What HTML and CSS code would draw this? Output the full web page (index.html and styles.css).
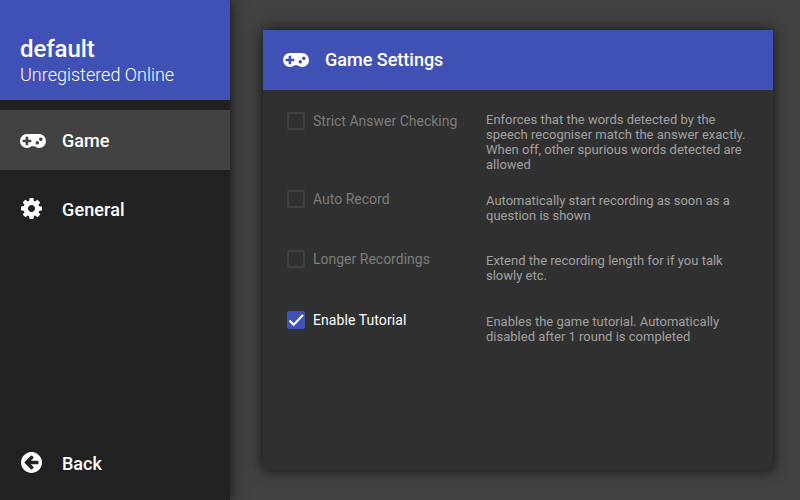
FILE: index.html
```html
<!DOCTYPE html>
<html lang="en">
<head>
<meta charset="utf-8">
<title>Game Settings</title>
<link rel="stylesheet" href="styles.css">
</head>
<body>
<svg class="defs" width="0" height="0">
  <symbol id="gamepad" viewBox="0 0 1920 1024">
    <path fill-rule="evenodd" transform="translate(0 1024) scale(1 -1)" d="M832 448v128q0 14-9 23t-23 9h-192v192q0 14-9 23t-23 9h-128q-14 0-23-9t-9-23v-192h-192q-14 0-23-9t-9-23v-128q0-14 9-23t23-9h192v-192q0-14 9-23t23-9h128q14 0 23 9t9 23v192h192q14 0 23 9t9 23zM1408 384q0 53-37.500 90.500t-90.500 37.500-90.500-37.500-37.500-90.500 37.500-90.500 90.500-37.500 90.500 37.500 37.500 90.500zM1664 640q0 53-37.500 90.500t-90.500 37.500-90.500-37.500-37.500-90.500 37.500-90.500 90.500-37.500 90.500 37.500 37.500 90.500zM1920 512q0-212-150-362t-362-150q-192 0-338 128h-220q-146-128-338-128-212 0-362 150t-150 362 150 362 362 150h896q212 0 362-150t150-362z"/>
  </symbol>
  <symbol id="cog" viewBox="128 128 1536 1536">
    <path d="M1152 896q0-106-75-181t-181-75-181 75-75 181 75 181 181 75 181-75 75-181zm512-109v222q0 12-8 23t-20 13l-185 28q-19 54-39 91 35 50 107 138 10 12 10 25t-9 23q-27 37-99 108t-94 71q-12 0-26-9l-138-108q-44 23-91 38-16 136-29 186-7 28-36 28h-222q-14 0-24.500-8.500t-11.500-21.500l-28-184q-49-16-90-37l-141 107q-10 9-25 9-14 0-25-11-126-114-165-168-7-10-7-23 0-12 8-23 15-21 51-66.500t54-70.500q-27-50-41-99l-183-27q-13-2-21-12.500t-8-23.500v-222q0-12 8-23t19-13l186-28q14-46 39-92-40-57-107-138-10-12-10-24 0-10 9-23 26-36 98.500-107.500t94.500-71.500q13 0 26 10l138 107q44-23 91-38 16-136 29-186 7-28 36-28h222q14 0 24.500 8.500t11.500 21.500l28 184q49 16 90 37l142-107q9-9 24-9 13 0 25 10 129 119 165 170 7 8 7 22 0 12-8 23-15 21-51 66.500t-54 70.500q26 50 41 98l183 28q13 2 21 12.500t8 23.500z"/>
  </symbol>
  <symbol id="back" viewBox="128 128 1536 1536">
    <path d="M1408 960v-128q0-26-19-45t-45-19h-502l189-189q19-19 19-45t-19-45l-91-91q-18-18-45-18t-45 18l-362 362-91 91q-18 18-18 45t18 45l91 91 362 362q18 18 45 18t45-18l91-91q18-18 18-45t-18-45l-189-189h502q26 0 45-19t19-45zm256-64q0 209-103 385.500t-279.500 279.500-385.500 103-385.500-103-279.500-279.500-103-385.500 103-385.500 279.500-279.500 385.500-103 385.500 103 279.500 279.500 103 385.500z"/>
  </symbol>
</svg>
<div class="app">
  <aside class="sidebar">
    <header class="account">
      <div class="account-name">default</div>
      <div class="account-status">Unregistered Online</div>
    </header>
    <nav class="nav">
      <a class="nav-item active"><svg class="icon-pad"><use href="#gamepad"/></svg><span>Game</span></a>
      <a class="nav-item nav-general"><svg class="icon-round"><use href="#cog"/></svg><span>General</span></a>
      <a class="nav-item nav-back"><svg class="icon-round"><use href="#back"/></svg><span>Back</span></a>
    </nav>
  </aside>
  <main class="content">
    <section class="panel">
      <header class="panel-head"><svg class="icon-pad"><use href="#gamepad"/></svg><h1>Game Settings</h1></header>
      <div class="settings">
        <div class="row row-strict">
          <div class="option"><span class="box"></span><span class="label">Strict Answer Checking</span></div>
          <p class="desc">Enforces that the words detected by the<br>speech recogniser match the answer exactly.<br>When off, other spurious words detected are<br>allowed</p>
        </div>
        <div class="row row-auto">
          <div class="option"><span class="box"></span><span class="label">Auto Record</span></div>
          <p class="desc">Automatically start recording as soon as a<br>question is shown</p>
        </div>
        <div class="row row-longer">
          <div class="option"><span class="box"></span><span class="label">Longer Recordings</span></div>
          <p class="desc">Extend the recording length for if you talk<br>slowly etc.</p>
        </div>
        <div class="row">
          <div class="option checked"><span class="box"><svg width="18" height="18" viewBox="0 0 18 18"><path d="M2.500 9.500L6.700 13.700L16 4" fill="none" stroke="#fff" stroke-width="2"/></svg></span><span class="label">Enable Tutorial</span></div>
          <p class="desc">Enables the game tutorial. Automatically<br>disabled after 1 round is completed</p>
        </div>
      </div>
    </section>
  </main>
</div>
</body>
</html>
```
FILE: styles.css
```css
* { box-sizing: border-box; }
body { margin: 0; font-family: Roboto, sans-serif; color: #fff; background: #424242; }
.defs { display: none; }
svg { display: block; fill: currentColor; }
.app { display: flex; width: 800px; height: 500px; overflow: hidden; }
.sidebar { display: flex; flex-direction: column; width: 230px; background: #212121; box-shadow: 0 0 14px rgba(0, 0, 0, .75); }
.account { height: 100px; padding: 35px 20px 0; background: #3f51b5; }
.account-name { font-size: 24px; line-height: 28px; font-weight: 500; letter-spacing: -.1px; }
.account-status { margin-top: 1px; font-size: 18px; line-height: 22px; font-weight: 300; white-space: nowrap; }
.nav { flex: 1; display: flex; flex-direction: column; padding-top: 10px; }
.nav-item { display: flex; align-items: center; height: 60px; padding-left: 20px; font-size: 18px; font-weight: 500; margin-bottom: 9px; }
.nav-item span { width: 140px; margin-left: auto; margin-right: 28px; padding-top: 1px; }
.nav-item.active { background: #424242; }
.nav-general span { letter-spacing: .12px; }
.nav-back { margin-top: auto; margin-bottom: 7px; }
.icon-pad { width: 26px; height: 14px; margin-top: 2px; }
.icon-round { width: 21px; height: 21px; margin: 0 0 1px 1px; }
.content { flex: 1; padding: 30px 27px 30px 33px; }
.panel { height: 440px; background: #303030; box-shadow: 0 0 14px rgba(0, 0, 0, .75); }
.panel-head { display: flex; align-items: center; gap: 16px; height: 60px; padding-left: 20px; background: #3f51b5; }
.panel-head .icon-pad { margin-top: 0; }
h1 { margin: 0 0 1px; font-size: 18px; line-height: 21px; font-weight: 500; }
.settings { padding: 22px 24px 0; }
.row { display: grid; grid-template-columns: 199px 1fr; height: 60px; }
.row-strict { height: 78px; }
.row-longer { height: 61px; }
.option { display: flex; align-items: center; gap: 8px; height: 18px; color: #7c7c7c; font-size: 14px; white-space: nowrap; }
.box { width: 18px; height: 18px; border: 2px solid #404040; border-radius: 2px; }
.checked { color: #fff; letter-spacing: .08px; }
.checked .box { border: 0; background: #3f51b5; }
.desc { margin: 0; font-size: 13px; line-height: 15px; color: #a0a0a0; white-space: nowrap; }
.row:not(.row-strict) .desc { padding-top: 3px; }
```
